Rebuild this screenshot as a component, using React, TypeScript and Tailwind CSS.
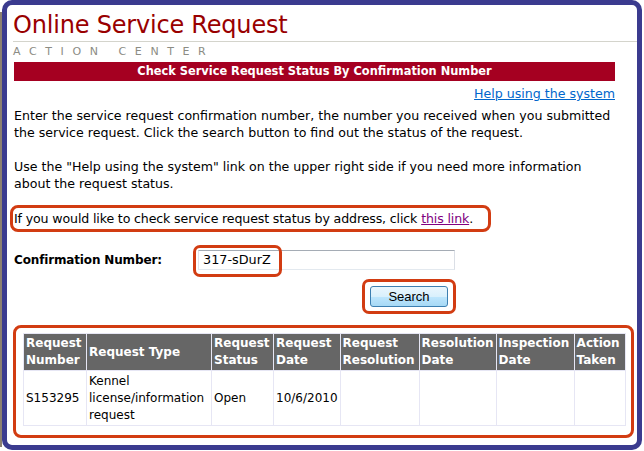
import React from "react";

const cols = [
  { w: "w-[63px]", label: ["Request", "Number"] },
  { w: "w-[125px]", label: ["Request Type"] },
  { w: "w-[62px]", label: ["Request", "Status"] },
  { w: "w-[66px]", label: ["Request", "Date"] },
  { w: "w-[79px]", label: ["Request", "Resolution"] },
  { w: "w-[76px]", label: ["Resolution", "Date"] },
  { w: "w-[78px]", label: ["Inspection", "Date"] },
  { w: "w-[51px]", label: ["Action", "Taken"] },
];

export default function App() {
  return (
    <div className="w-[644px] h-[451px] bg-white flex font-['DejaVu_Sans',sans-serif] text-[12.6px] text-black">
      <div className="w-[2px] mt-[12px] mb-[4px] bg-[#8c8070]" />
      <div className="w-[640px] h-[450px] border-[5px] border-[#3b3b8f] rounded-[10px] flex flex-col">
        <div className="pl-[6px] pt-[5px] text-[24px] leading-[30px] text-[#990000] tracking-[-0.2px]">
          Online Service Request
        </div>
        <div className="ml-[6px] mt-[1px] h-px bg-[#d4d4cc]" />
        <div className="pl-[6px] mt-[3px] text-[11px] leading-[14px] text-[#8c8c84] tracking-[8.6px]">
          ACTION CENTER
        </div>
        <div className="ml-[7px] mr-[22px] mt-[3px] h-[19px] bg-[#a50021] text-white font-bold text-[11.4px] flex items-center justify-center">
          Check Service Request Status By Confirmation Number
        </div>
        <div className="mr-[22px] mt-[5px] text-right leading-[16px]">
          <a href="#" className="text-[#0066cc] underline">Help using the system</a>
        </div>
        <div className="pl-[7px] mt-[5px] leading-[17px] whitespace-nowrap">
          <p>
            Enter the service request confirmation number, the number you received when you submitted
            <br />
            the service request. Click the search button to find out the status of the request.
          </p>
          <p className="mt-[17px]">
            Use the "Help using the system" link on the upper right side if you need more information
            <br />
            about the request status.
          </p>
        </div>
        <div className="ml-[3px] mt-[13px] w-[481px] h-[27px] border-[3px] border-[#d23c12] rounded-[8px] pl-[1px] leading-[17px] flex items-center whitespace-nowrap tracking-[-0.14px]">
          <span>
            If you would like to check service request status by address, click{" "}
            <a href="#" className="text-[#800080] underline">this link</a>.
          </span>
        </div>
        <div className="mt-[18px] pl-[7px] flex items-center h-[20px]">
          <span className="font-bold text-[12px] tracking-[-0.15px] w-[184px]">Confirmation Number:</span>
          <div className="relative">
            <div className="w-[257px] h-[20px] border border-[#a5acb5] border-l-[#e2e3ea] border-r-[#dbdfe6] border-b-[#e3e9ef] bg-white pl-[4px] leading-[18px] text-[12.8px]">
              317-sDurZ
            </div>
            <div className="absolute left-[-5px] top-[-5px] w-[89px] h-[32px] border-[3px] border-[#d23c12] rounded-[7px]" />
          </div>
        </div>
        <div className="mt-[9px] ml-[355px] w-[94px] h-[35px] border-[3px] border-[#d23c12] rounded-[7px] flex items-center justify-center">
          <button className="w-[78px] h-[21px] rounded-[3px] border border-[#3c7fb1] bg-[linear-gradient(#eaf6fd_0%,#d9f0fc_50%,#bee6fd_51%,#a7d9f5_100%)] font-['Liberation_Sans',sans-serif] text-[13px] leading-[18px] text-black">
            Search
          </button>
        </div>
        <div className="mt-[11px] ml-[6px] w-[621px] h-[113px] border-[3px] border-[#d23c12] rounded-[8px] pt-[5px] pl-[7px]">
          <table className="border-collapse border border-[#a0a0a0] text-[12px]">
            <thead>
              <tr className="bg-[#666666] text-white font-bold text-left h-[37px]">
                {cols.map((c, i) => (
                  <th key={i} className={`${c.w} border border-[#e6e6f4] px-[2px] align-middle leading-[17px] font-bold`}>
                    {c.label.map((l, j) => (
                      <div key={j} className="whitespace-nowrap">{l}</div>
                    ))}
                  </th>
                ))}
              </tr>
            </thead>
            <tbody>
              <tr className="h-[55px] leading-[17px]">
                <td className="border border-[#e6e6f4] px-[2px]">S153295</td>
                <td className="border border-[#e6e6f4] px-[2px]">Kennel license/information request</td>
                <td className="border border-[#e6e6f4] px-[2px]">Open</td>
                <td className="border border-[#e6e6f4] px-[2px]">10/6/2010</td>
                <td className="border border-[#e6e6f4] px-[2px]"></td>
                <td className="border border-[#e6e6f4] px-[2px]"></td>
                <td className="border border-[#e6e6f4] px-[2px]"></td>
                <td className="border border-[#e6e6f4] px-[2px]"></td>
              </tr>
            </tbody>
          </table>
        </div>
      </div>
    </div>
  );
}
